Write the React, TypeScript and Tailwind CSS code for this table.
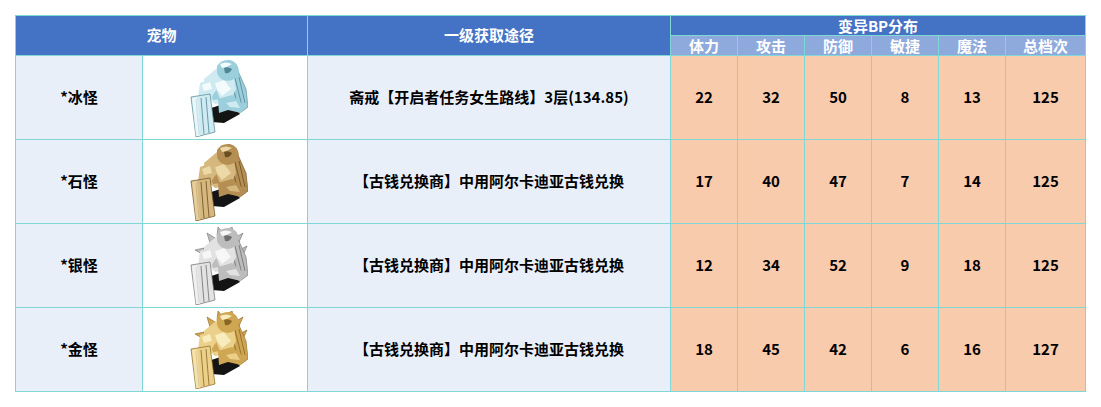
import React from "react";

type Palette = { light: string; mid: string; dark: string; hi: string };

const palettes: Record<string, Palette> = {
  ice: { light: "#cfeaf1", mid: "#9ccfdc", dark: "#4f8796", hi: "#f4fbfd" },
  stone: { light: "#d6b77e", mid: "#b48e52", dark: "#6b4e22", hi: "#ecd9a8" },
  silver: { light: "#e2e2e2", mid: "#bdbdbd", dark: "#6e6e6e", hi: "#f7f7f7" },
  gold: { light: "#ebd08a", mid: "#cfa652", dark: "#8a6524", hi: "#f8ebbd" },
};

const rows = [
  { name: "*冰怪", kind: "ice", spiky: false, source: "斋戒【开启者任务女生路线】3层(134.85)", stats: [22, 32, 50, 8, 13, 125] },
  { name: "*石怪", kind: "stone", spiky: false, source: "【古钱兑换商】中用阿尔卡迪亚古钱兑换", stats: [17, 40, 47, 7, 14, 125] },
  { name: "*银怪", kind: "silver", spiky: true, source: "【古钱兑换商】中用阿尔卡迪亚古钱兑换", stats: [12, 34, 52, 9, 18, 125] },
  { name: "*金怪", kind: "gold", spiky: true, source: "【古钱兑换商】中用阿尔卡迪亚古钱兑换", stats: [18, 45, 42, 6, 16, 127] },
];

const statHeads = ["体力", "攻击", "防御", "敏捷", "魔法", "总档次"];

function Golem({ p, spiky }: { p: Palette; spiky: boolean }) {
  return (
    <svg width="60" height="78" viewBox="0 0 60 78">
      {spiky && (
        <g fill={p.mid} stroke={p.dark} strokeWidth="0.6">
          <path d="M22 16 L19 6 L27 11 Z" />
          <path d="M29 9 L30 0 L35 6 Z" />
          <path d="M40 4 L44 -1 L45 6 Z" />
          <path d="M48 10 L55 6 L51 15 Z" />
          <path d="M14 27 L7 23 L16 21 Z" />
          <path d="M53 22 L59 19 L55 28 Z" />
        </g>
      )}
      {/* shadow under the crouch */}
      <path d="M20 50 L42 43 L52 55 L36 64 L24 63 Z" fill="#141414" />
      {/* right arm */}
      <path d="M38 15 L50 12 L58 30 L60 48 L52 54 L43 41 Z" fill={p.mid} stroke={p.dark} strokeWidth="0.6" />
      <g stroke={p.dark} strokeWidth="0.8">
        <line x1="47" y1="19" x2="54" y2="47" />
        <line x1="51" y1="18" x2="57" y2="44" />
        <line x1="44" y1="24" x2="50" y2="48" />
      </g>
      {/* torso */}
      <path d="M16 20 L29 9 L45 13 L48 30 L42 43 L27 45 L18 37 Z" fill={p.light} />
      <path d="M25 25 L36 21 L43 30 L34 37 Z" fill={p.hi} />
      <path d="M22 32 L28 30 L32 40 L25 41 Z" fill={p.mid} />
      {/* legs */}
      <path d="M30 40 L44 36 L55 45 L53 54 L40 51 L31 54 Z" fill={p.mid} />
      <path d="M38 44 L48 42 L52 49 L42 48 Z" fill={p.light} />
      {/* head */}
      <path d="M29 7 Q33 0 42 1 Q50 3 51 12 Q49 21 40 22 Q31 21 29 14 Z" fill={p.mid} />
      <path d="M32 5 Q38 2 44 5 Q40 8 34 9 Z" fill={p.hi} />
      <path d="M36 9 Q40 7 44 10 Q42 15 37 14 Z" fill={p.dark} />
      {/* left upper arm */}
      <path d="M12 24 L25 19 L29 30 L23 39 L10 39 Z" fill={p.light} />
      <path d="M14 26 L22 23 L24 30 L16 32 Z" fill={p.hi} />
      {/* left forearm block */}
      <path d="M3 38 L22 35 L27 73 L8 78 Z" fill={p.light} stroke={p.dark} strokeWidth="0.7" />
      <g stroke={p.dark} strokeWidth="0.8">
        <line x1="8" y1="40" x2="11" y2="76" />
        <line x1="13" y1="39" x2="16" y2="75" />
        <line x1="18" y1="38" x2="21" y2="74" />
      </g>
      <path d="M4 39 L9 38 L12 77 L8 77 Z" fill={p.hi} opacity="0.7" />
    </svg>
  );
}

export default function App() {
  return (
    <div className="bg-white w-[1101px] h-[407px] pt-[15px] pl-[15px] font-['Noto_Sans_CJK_SC','Noto_Sans',sans-serif]">
      <div className="grid w-[1071px] bg-[#7fd8d5] gap-px p-px grid-cols-[126px_164px_362px_66px_66px_66px_66px_66px_79px] grid-rows-[19px_19px_83px_83px_83px_83px] text-[15px] font-bold">
        <div className="col-span-2 row-span-2 bg-[#4472c4] text-white flex items-center justify-center">宠物</div>
        <div className="row-span-2 bg-[#4472c4] text-white flex items-center justify-center">一级获取途径</div>
        <div className="col-span-6 bg-[#4472c4] text-white flex items-center justify-center leading-none">变异BP分布</div>
        {statHeads.map((h) => (
          <div key={h} className="bg-[#8ea9db] text-white flex items-center justify-center leading-none">
            {h}
          </div>
        ))}
        {rows.map((r) => (
          <React.Fragment key={r.name}>
            <div className="bg-[#e9eff9] flex items-center justify-center text-black">{r.name}</div>
            <div className="bg-white flex items-center justify-center pr-[14px]">
              <Golem p={palettes[r.kind]} spiky={r.spiky} />
            </div>
            <div className="bg-[#e9eff9] flex items-center justify-center text-black">{r.source}</div>
            {r.stats.map((s, i) => (
              <div key={i} className="bg-[#f8cbad] flex items-center justify-center text-black">
                {s}
              </div>
            ))}
          </React.Fragment>
        ))}
      </div>
    </div>
  );
}
